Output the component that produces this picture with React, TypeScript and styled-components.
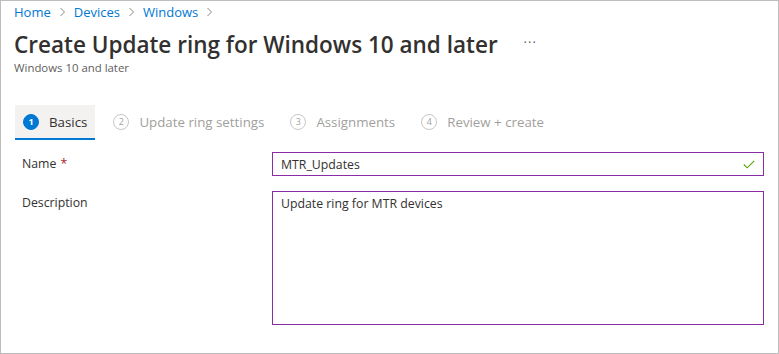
import React from "react";
import styled, { createGlobalStyle } from "styled-components";

const GlobalStyle = createGlobalStyle`
  html, body {
    margin: 0;
    padding: 0;
    background: #ffffff;
  }
  body {
    font-family: "Open Sans", "Noto Sans", sans-serif;
    color: #323130;
  }
`;

const Frame = styled.div`
  width: 779px;
  height: 354px;
  box-sizing: border-box;
  border: 1px solid #bdbdbd;
  padding: 2px 13px 0 13px;
  overflow: hidden;
`;

const Breadcrumb = styled.nav`
  display: flex;
  align-items: center;
  height: 18px;
  font-size: 13px;
`;

const Crumb = styled.a`
  color: #0078d4;
  text-decoration: none;
`;

const Chevron = styled.span`
  display: inline-flex;
  align-items: center;
  margin: 0 8px;
`;

const TitleRow = styled.div`
  display: flex;
  align-items: center;
  margin-top: 8px;
`;

const Title = styled.h1`
  margin: 0;
  font-size: 22.5px;
  font-weight: 600;
  line-height: 32px;
  color: #323130;
`;

const More = styled.span`
  margin-left: 26px;
  font-size: 13px;
  color: #605e5c;
  letter-spacing: 1px;
  position: relative;
  top: -3px;
`;

const Subtitle = styled.div`
  font-size: 11.4px;
  color: #605e5c;
  line-height: 14px;
`;

const Tabs = styled.div`
  display: flex;
  align-items: stretch;
  gap: 10px;
  margin-top: 30px;
  margin-left: 1px;
`;

const Tab = styled.div<{ $active?: boolean }>`
  display: flex;
  align-items: center;
  gap: 10px;
  height: 33px;
  padding: 0 8px;
  background: ${(p) => (p.$active ? "#f3f2f1" : "transparent")};
  border-bottom: 2px solid ${(p) => (p.$active ? "#0078d4" : "transparent")};
  font-size: 13.3px;
  color: ${(p) => (p.$active ? "#323130" : "#a19f9d")};
`;

const Step = styled.span<{ $active?: boolean }>`
  width: 16px;
  height: 16px;
  box-sizing: border-box;
  border-radius: 50%;
  display: inline-flex;
  align-items: center;
  justify-content: center;
  font-size: 9px;
  font-weight: ${(p) => (p.$active ? 700 : 400)};
  background: ${(p) => (p.$active ? "#0078d4" : "transparent")};
  color: ${(p) => (p.$active ? "#ffffff" : "#a19f9d")};
  border: 1px solid ${(p) => (p.$active ? "#0078d4" : "#c8c6c4")};
`;

const Form = styled.div`
  display: flex;
  flex-direction: column;
  gap: 15px;
  margin-top: 12px;
  padding-left: 8px;
`;

const Row = styled.div`
  display: grid;
  grid-template-columns: 250px 492px;
  align-items: start;
`;

const Label = styled.label`
  font-size: 12.3px;
  line-height: 24px;
  color: #323130;
`;

const Required = styled.span`
  color: #a4262c;
  margin-left: 4px;
`;

const InputBox = styled.div`
  display: flex;
  align-items: center;
  height: 24px;
  box-sizing: border-box;
  border: 1px solid #8a2da5;
  padding: 0 8px;
  font-size: 12.3px;
  color: #323130;
`;

const InputText = styled.span`
  flex: 1;
`;

const TextArea = styled.div`
  height: 134px;
  box-sizing: border-box;
  border: 1px solid #8a2da5;
  padding: 3px 8px;
  font-size: 12.3px;
  line-height: 18px;
  color: #323130;
`;

const ChevronIcon = () => (
  <svg width="7" height="10" viewBox="0 0 7 10">
    <path d="M1.5 1 L5.5 5 L1.5 9" fill="none" stroke="#8a8886" strokeWidth="1" />
  </svg>
);

const CheckIcon = () => (
  <svg width="12" height="9" viewBox="0 0 12 9">
    <path d="M0.8 4.5 L4.2 7.8 L11.2 0.8" fill="none" stroke="#57a300" strokeWidth="1.1" />
  </svg>
);

const steps = ["Basics", "Update ring settings", "Assignments", "Review + create"];

export default function App() {
  return (
    <Frame>
      <GlobalStyle />
      <Breadcrumb>
        <Crumb>Home</Crumb>
        <Chevron><ChevronIcon /></Chevron>
        <Crumb>Devices</Crumb>
        <Chevron><ChevronIcon /></Chevron>
        <Crumb>Windows</Crumb>
        <Chevron><ChevronIcon /></Chevron>
      </Breadcrumb>
      <TitleRow>
        <Title>Create Update ring for Windows 10 and later</Title>
        <More>···</More>
      </TitleRow>
      <Subtitle>Windows 10 and later</Subtitle>
      <Tabs>
        {steps.map((s, i) => (
          <Tab key={s} $active={i === 0}>
            <Step $active={i === 0}>{i + 1}</Step>
            {s}
          </Tab>
        ))}
      </Tabs>
      <Form>
        <Row>
          <Label>
            Name<Required>*</Required>
          </Label>
          <InputBox>
            <InputText>MTR_Updates</InputText>
            <CheckIcon />
          </InputBox>
        </Row>
        <Row>
          <Label>Description</Label>
          <TextArea>Update ring for MTR devices</TextArea>
        </Row>
      </Form>
    </Frame>
  );
}
